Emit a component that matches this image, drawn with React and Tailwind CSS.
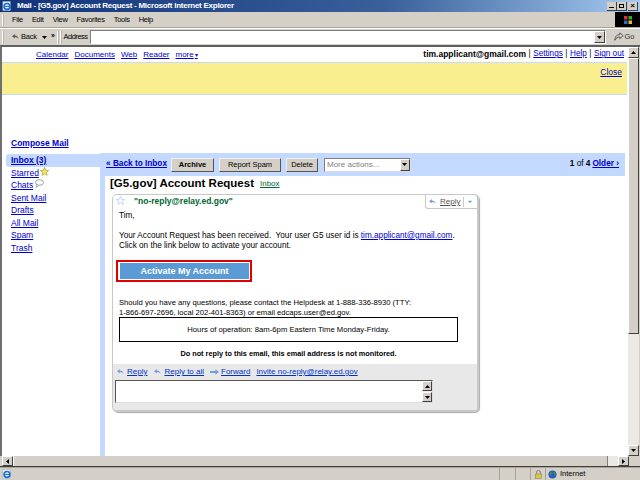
import React from "react";

const font = { fontFamily: '"Liberation Sans", Arial, sans-serif' };

const labels = [
  { name: "Inbox (3)", bold: true },
  { name: "Starred" },
  { name: "Chats" },
  { name: "Sent Mail" },
  { name: "Drafts" },
  { name: "All Mail" },
  { name: "Spam" },
  { name: "Trash" },
];

const IeIcon = ({ className }) => (
  <svg viewBox="0 0 12 12" className={className}>
    <rect x="1" y="0.5" width="9" height="11" fill="#e8eef8" stroke="#8aa" strokeWidth="0.5" />
    <circle cx="6" cy="6.5" r="3.5" fill="none" stroke="#1f6fd0" strokeWidth="2" />
    <path d="M3 6.5h6" stroke="#1f6fd0" strokeWidth="1.2" />
  </svg>
);

const ArrowBack = ({ className, color = "#6f9fd8" }) => (
  <svg viewBox="0 0 12 10" className={className}>
    <path d="M5 1 1.5 4 5 7V5c3 0 4 1 5 3 0-3-2-5-5-5z" fill={color} />
  </svg>
);

const Chevron = ({ dir = "down" }) => (
  <svg viewBox="0 0 7 7" className="w-[7px] h-[7px]">
    {dir === "down" && <path d="M1 2h5L3.5 5z" fill="#000" />}
    {dir === "up" && <path d="M1 5h5L3.5 2z" fill="#000" />}
    {dir === "left" && <path d="M5 1v5L2 3.5z" fill="#000" />}
    {dir === "right" && <path d="M2 1v5l3-2.5z" fill="#000" />}
  </svg>
);

const ScrollBtn = ({ dir, className = "" }) => (
  <div className={`flex items-center justify-center bg-[#d4d0c8] border border-t-white border-l-white border-r-[#404040] border-b-[#404040] ${className}`}>
    <Chevron dir={dir} />
  </div>
);

const GrayBtn = ({ children, className = "" }) => (
  <div className={`h-[14px] flex items-center justify-center bg-[#d4d0c8] border border-[#f0f0f0] border-r-[#555] border-b-[#555] text-[7.5px] text-black ${className}`}>
    {children}
  </div>
);

const WinBtn = ({ children, className = "" }) => (
  <div className={`w-[10px] h-[9px] bg-[#d4d0c8] border-r border-b border-[#404040] flex items-center justify-center ${className}`}>
    {children}
  </div>
);

export default function App() {
  return (
    <div className="w-[640px] h-[480px] flex flex-col overflow-hidden bg-[#d4d0c8] text-black" style={font}>
      {/* title bar */}
      <div className="h-[12px] shrink-0 flex items-center bg-gradient-to-r from-[#12337a] via-[#3a5f9a] via-60% to-[#a6caf0] pl-[2px] pr-[2px]">
        <IeIcon className="w-[10px] h-[10px]" />
        <span className="ml-[5px] text-[8px] tracking-[-0.25px] font-bold text-white leading-none">Mail - [G5.gov] Account Request - Microsoft Internet Explorer</span>
        <div className="ml-auto flex">
          <WinBtn><div className="w-[5px] h-[1px] bg-black mt-[4px]" /></WinBtn>
          <WinBtn><div className="w-[5px] h-[4px] border border-black" /></WinBtn>
          <WinBtn className="ml-[1px] text-[8px] font-bold leading-none">×</WinBtn>
        </div>
      </div>

      {/* menu bar */}
      <div className="h-[16px] shrink-0 flex items-center border-b border-[#a8a498] pl-[2px]">
        <div className="w-[2px] h-[12px] border-l border-white bg-[#b8b4aa] mr-[8px]" />
        <div className="flex text-[7.5px] tracking-[-0.3px] gap-[9px] leading-none">
          <span>File</span>
          <span>Edit</span>
          <span>View</span>
          <span>Favorites</span>
          <span>Tools</span>
          <span>Help</span>
        </div>
        <div className="ml-auto w-[25px] h-[15px] bg-black flex items-center justify-center">
          <svg viewBox="0 0 10 10" className="w-[10px] h-[10px]">
            <path d="M1 1h3.5v3.500H1z" fill="#d33" />
            <path d="M5.500 1H9v3.500H5.500z" fill="#3a3" />
            <path d="M1 5.500h3.500V9H1z" fill="#36c" />
            <path d="M5.500 5.500H9V9H5.500z" fill="#db3" />
          </svg>
        </div>
      </div>

      {/* address bar */}
      <div className="h-[17px] shrink-0 flex items-center border-t border-white pl-[2px] text-[7.5px] tracking-[-0.2px] leading-none">
        <div className="w-[2px] h-[13px] bg-[#b8b4aa] border-l border-white mr-[7px]" />
        <ArrowBack className="w-[9px] h-[8px]" color="#555" />
        <span className="ml-[1px]">Back</span>
        <span className="ml-[4px]"><Chevron dir="down" /></span>
        <span className="text-[7px] font-bold ml-[3px] -mt-[3px]">»</span>
        <div className="w-[2px] h-[13px] bg-[#b8b4aa] border-l border-white ml-[2px]" />
        <div className="w-[2px] h-[13px] bg-[#b8b4aa] border-l border-white ml-[1px] mr-[2px]" />
        <span className="mr-[2px] tracking-[-0.5px]">Address</span>
        <div className="w-[516px] h-[14px] shrink-0 bg-white border border-[#808080] border-r-white border-b-white flex justify-end">
          <ScrollBtn dir="down" className="w-[11px] h-[12px]" />
        </div>
        <svg viewBox="0 0 12 12" className="w-[10px] h-[10px] ml-[8px] shrink-0">
          <path d="M1 10c0-5 3-7 6-7V1l4 3.500L7 8V6c-3 0-4 1-6 4z" fill="none" stroke="#444" strokeWidth="1" />
        </svg>
        <span className="ml-[1px] text-[#333]">Go</span>
      </div>

      {/* browser body */}
      <div className="flex-1 min-h-0 flex border-t-2 border-[#606060] border-l-2 border-l-[#707070]">
        <div className="flex-1 min-w-0 bg-white flex flex-col">
          <div className="h-[15px] shrink-0 flex items-center justify-between text-[8.2px] pl-[34px] pr-[4px]">
            <div className="flex gap-[6px] text-[8px] text-[#0000cc] underline">
              <span>Calendar</span>
              <span>Documents</span>
              <span>Web</span>
              <span>Reader</span>
              <span>more</span>
              <span className="no-underline text-[6px] -ml-[5px] mt-[2px]">▾</span>
            </div>
            <div className="flex gap-[2.5px]">
              <span className="font-bold text-[8.5px]">tim.applicant@gmail.com</span>
              <span>|</span>
              <span className="text-[#0000cc] underline">Settings</span>
              <span>|</span>
              <span className="text-[#0000cc] underline">Help</span>
              <span>|</span>
              <span className="text-[#0000cc] underline">Sign out</span>
            </div>
          </div>

          <div className="h-[33px] shrink-0 bg-[#faef8e] border-y border-[#c3d9ff] flex justify-end pr-[5px] pt-[5px] text-[8.500px] mr-[1px]">
            <span className="text-[#0000cc] underline leading-none">Close</span>
          </div>

          <div className="h-[59px] shrink-0 pl-[9px] flex items-end pb-[7px] text-[8.500px] font-bold text-[#0000cc] underline leading-none">
            <span>Compose Mail</span>
          </div>

          <div className="flex flex-1 min-h-0">
            {/* sidebar */}
            <div className="w-[98px] shrink-0 pl-[4px] text-[8.500px] text-[#0000cc]">
              {labels.map((label) => (
                <div
                  key={label.name}
                  className={`h-[12.600px] flex items-center pl-[5px] gap-[1px] ${label.bold ? "bg-[#c3d9ff] rounded-l-[3px] font-bold" : ""}`}
                >
                  <span className="underline">{label.name}</span>
                  {label.name === "Starred" && (
                    <svg viewBox="0 0 10 10" className="w-[9px] h-[9px] -mt-[2px]">
                      <path d="M5 .5 6.300 3.600 9.600 3.900 7.100 6 7.900 9.300 5 7.600 2.100 9.300 2.900 6 .4 3.900 3.700 3.600z" fill="#fce94f" stroke="#8a8a30" strokeWidth="0.6" />
                    </svg>
                  )}
                  {label.name === "Chats" && (
                    <svg viewBox="0 0 10 9" className="w-[10px] h-[9px] -mt-[3px]">
                      <ellipse cx="5.500" cy="3.500" rx="4" ry="2.800" fill="#fff" stroke="#777" strokeWidth="0.7" />
                      <path d="M3 6 2 8.500 5 6.300" fill="#fff" stroke="#777" strokeWidth="0.6" />
                    </svg>
                  )}
                </div>
              ))}
            </div>

            {/* message column */}
            <div className="flex-1 min-w-0 flex flex-col bg-[#c3d9ff] pl-[5px] mr-[3px] -mt-[1px]">
              <div className="h-[23px] shrink-0 flex items-center text-[8.250px] pr-[6px] -ml-[5px] pl-[6px]">
                <span className="font-bold text-[#0000cc] underline">« Back to Inbox</span>
                <GrayBtn className="ml-[4px] w-[43px] font-bold">Archive</GrayBtn>
                <GrayBtn className="ml-[5px] w-[62px]">Report Spam</GrayBtn>
                <GrayBtn className="ml-[5px] w-[32px]">Delete</GrayBtn>
                <div className="ml-[6px] w-[87px] h-[14px] bg-white border border-[#808080] border-r-[#ddd] border-b-[#ddd] flex items-center justify-between pl-[2px] text-[8px] text-[#808080]">
                  <span>More actions...</span>
                  <ScrollBtn dir="down" className="w-[10px] h-[12px]" />
                </div>
                <div className="ml-auto flex gap-[2px]">
                  <span><b>1</b> of <b>4</b></span>
                  <span className="font-bold text-[#0000cc] underline">Older ›</span>
                </div>
              </div>

              <div className="flex-1 min-h-0 bg-white pl-[5px] pt-[1px]">
                <div className="h-[17px] flex items-center pb-[3px]">
                  <span className="text-[11.500px] font-bold leading-none">[G5.gov] Account Request</span>
                  <span className="ml-[6px] text-[8px] text-[#006633] underline">Inbox</span>
                </div>

                <div className="w-[367px] ml-[2px] h-[218px] flex flex-col rounded-[5px] border-2 border-t border-l border-[#c8c8c8] shadow-[1px_1px_1px_#aaa] overflow-hidden">
                  <div className="h-[14px] shrink-0 flex">
                    <svg viewBox="0 0 10 10" className="w-[9px] h-[9px] ml-[3px] mt-[1px]">
                      <path d="M5 .5 6.300 3.600 9.600 3.900 7.100 6 7.900 9.300 5 7.600 2.100 9.300 2.900 6 .4 3.900 3.700 3.600z" fill="#fff" stroke="#a8c4f0" strokeWidth="0.8" />
                    </svg>
                    <span className="ml-[9px] text-[8.500px] font-bold text-[#006633] leading-[13px]">"no-reply@relay.ed.gov"</span>
                    <div className="ml-auto w-[52px] h-[14px] border-l border-b border-[#c8c8c8] rounded-bl-[3px] flex items-center text-[8px] text-[#555] pl-[2px]">
                      <ArrowBack className="w-[9px] h-[8px]" />
                      <span className="underline ml-[3px]">Reply</span>
                      <span className="ml-[3px] h-[10px] w-[1px] bg-[#ccc]" />
                      <svg viewBox="0 0 7 7" className="w-[6px] h-[6px] ml-[3px]"><path d="M1 2h5L3.500 5z" fill="#6f9fd8" /></svg>
                    </div>
                  </div>

                  <div className="flex-1 min-h-0 pl-[6px] text-[8.200px] leading-[10px] text-black">
                    <div className="mt-[2px]">Tim,</div>
                    <div className="mt-[10px]">
                      Your Account Request has been received.&nbsp; Your user G5 user id is <span className="text-[#0000cc] underline">tim.applicant@gmail.com</span>.
                    </div>
                    <div>Click on the link below to activate your account.</div>
                    <div className="mt-[9px] -ml-[3px] w-[136px] h-[22px] border-2 border-[#e00000] py-[1px] pl-[2px] pr-[1px]">
                      <div className="w-full h-full bg-[#5b9bd5] flex items-center justify-center text-white font-bold text-[9px]">Activate My Account</div>
                    </div>
                    <div className="mt-[16px] text-[7.650px]">Should you have any questions, please contact the Helpdesk at 1-888-336-8930 (TTY:</div>
                    <div className="text-[7.650px]">1-866-697-2696, local 202-401-8363) or email edcaps.user@ed.gov.</div>
                    <div className="-mt-[1px] w-[339px] h-[25px] border border-black flex items-center justify-center text-[7.700px]">Hours of operation: 8am-6pm Eastern Time Monday-Friday.</div>
                    <div className="w-[339px] mt-[7px] text-center font-bold text-[7.300px]">Do not reply to this email, this email address is not monitored.</div>
                  </div>

                  <div className="h-[46px] shrink-0 bg-[#e8e8e8] pl-[2px] text-[8px] text-[#0033cc]">
                    <div className="h-[16px] flex items-center pl-[1px]">
                      <ArrowBack className="w-[9px] h-[8px]" />
                      <span className="underline ml-[2px]">Reply</span>
                      <ArrowBack className="w-[9px] h-[8px] ml-[6px]" />
                      <span className="underline ml-[2px]">Reply to all</span>
                      <svg viewBox="0 0 10 8" className="w-[9px] h-[8px] ml-[6px]"><path d="M0 3h6V1l4 3-4 3V5H0z" fill="#6f9fd8" /></svg>
                      <span className="underline ml-[2px]">Forward</span>
                      <span className="underline ml-[6px]">Invite no-reply@relay.ed.gov</span>
                    </div>
                    <div className="w-[318px] h-[23px] bg-white border border-[#555] border-r-[#ddd] border-b-[#ddd] flex justify-end">
                      <div className="w-[10px] flex flex-col bg-[#eee]">
                        <ScrollBtn dir="up" className="w-[10px] h-[10px]" />
                        <div className="flex-1" />
                        <ScrollBtn dir="down" className="w-[10px] h-[10px]" />
                      </div>
                    </div>
                  </div>
                </div>
              </div>
            </div>
          </div>
        </div>

        {/* vertical scrollbar */}
        <div className="w-[11px] shrink-0 flex flex-col bg-[#ece9e2] mr-[1px]">
          <ScrollBtn dir="up" className="w-[11px] h-[11px]" />
          <div className="h-[276px] bg-[#d4d0c8] border border-t-white border-l-white border-r-[#404040] border-b-[#404040]" />
          <div className="flex-1" />
          <ScrollBtn dir="down" className="w-[11px] h-[11px]" />
        </div>
      </div>

      {/* horizontal scrollbar */}
      <div className="h-[11px] shrink-0 flex bg-[#d4d0c8] border-b border-[#404040]">
        <ScrollBtn dir="left" className="w-[11px] ml-[2px]" />
        <div className="w-[595px] bg-[#d4d0c8] border-l border-white border-r border-r-[#808080]" />
        <div className="w-[10px] bg-[#ece9e2]" />
        <ScrollBtn dir="right" className="w-[11px]" />
      </div>

      {/* status bar */}
      <div className="h-[13px] shrink-0 flex items-center border-t border-[#a8a498] pl-[2px] text-[7.500px]">
        <IeIcon className="w-[10px] h-[10px]" />
        <div className="ml-auto flex h-full items-center">
          <div className="w-[16px] h-full border-l border-[#a8a498]" />
          <div className="w-[15px] h-full border-l border-[#a8a498]" />
          <div className="w-[15px] h-full border-l border-[#a8a498] flex items-center justify-center">
            <svg viewBox="0 0 10 10" className="w-[9px] h-[10px]">
              <path d="M3 5V3a2 2 0 0 1 4 0v2" fill="none" stroke="#776" strokeWidth="1" />
              <rect x="1.500" y="5" width="7" height="5" fill="#d8c840" stroke="#776" strokeWidth="0.5" />
            </svg>
          </div>
          <div className="w-[95px] h-full border-l border-[#a8a498] flex items-center pl-[2px] gap-[3px]">
            <svg viewBox="0 0 10 10" className="w-[9px] h-[9px]">
              <circle cx="5" cy="5" r="4.500" fill="#2a5cc0" />
              <path d="M2 3c2-1 3 0 3 1s-2 1-2 3zM6 2c2 0 3 2 2 4-1 0-2-2-2-4z" fill="#3a9a3a" />
            </svg>
            <span>Internet</span>
          </div>
        </div>
      </div>
    </div>
  );
}
